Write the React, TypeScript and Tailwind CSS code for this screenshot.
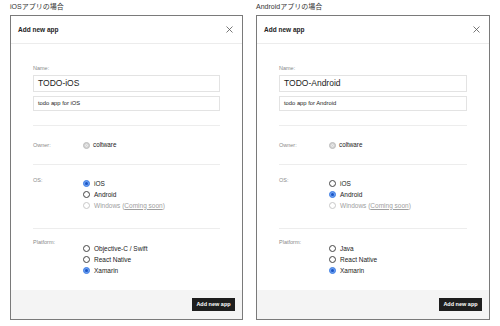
import React from 'react';

type Option = { label: string; checked?: boolean; disabled?: boolean; soon?: boolean };

function Radio({ checked, disabled }: { checked?: boolean; disabled?: boolean }) {
  if (checked) {
    return (
      <span className="w-[7px] h-[7px] rounded-full bg-[#6d9ff0] border border-[#3f7fe4] flex items-center justify-center shrink-0">
        <span className="w-[3px] h-[3px] rounded-full bg-[#1b55c4]" />
      </span>
    );
  }
  return (
    <span
      className={
        disabled
          ? 'w-[7px] h-[7px] rounded-full border border-[#c8c8c8] bg-white shrink-0'
          : 'w-[7px] h-[7px] rounded-full border border-[#444] bg-white shrink-0'
      }
    />
  );
}

function RadioGroup({ label, options, labelOffset }: { label: string; options: Option[]; labelOffset: string }) {
  return (
    <div className="flex items-start">
      <div className={`w-[50px] shrink-0 text-[5.5px] leading-[7px] text-[#8a8a8a] ${labelOffset}`}>{label}</div>
      <div className="flex flex-col">
        {options.map((o) => (
          <div key={o.label} className="h-[11px] flex items-center gap-[4px]">
            <Radio checked={o.checked} disabled={o.disabled} />
            <span
              className={
                o.disabled
                  ? 'text-[6.5px] leading-[8px] text-[#a0a0a0]'
                  : 'text-[6.5px] leading-[8px] text-[#222] font-medium'
              }
            >
              {o.soon ? (
                <>
                  {o.label} (<span className="underline">Coming soon</span>)
                </>
              ) : (
                o.label
              )}
            </span>
          </div>
        ))}
      </div>
    </div>
  );
}

function Dialog({ name, desc, os, platforms, width }: { name: string; desc: string; os: Option[]; platforms: Option[]; width: string }) {
  return (
    <div className={`${width} h-[305px] border border-[#7a7a7a] flex flex-col bg-white`}>
      <div className="h-[28px] border-b border-[#ececec] flex items-center justify-between pl-[7px] pr-[9px]">
        <span className="text-[6.5px] font-bold text-[#222]">Add new app</span>
        <svg width="7" height="7" viewBox="0 0 7 7" className="text-[#555]">
          <path d="M0.5 0.5 L6.5 6.5 M6.5 0.5 L0.5 6.5" stroke="currentColor" strokeWidth="0.8" />
        </svg>
      </div>
      <div className="flex-1 px-[22px] pt-[21px]">
        <div className="text-[5.5px] leading-[7px] text-[#8a8a8a] mb-[3px]">Name:</div>
        <div className="h-[17px] border border-[#e3e3e3] flex items-center pl-[4px] text-[8.5px] text-[#222]">{name}</div>
        <div className="mt-[4px] h-[15px] border border-[#e3e3e3] flex items-center pl-[4px] text-[5.8px] text-[#222]">{desc}</div>
        <div className="mt-[14px] border-t border-[#ededed]" />
        <div className="h-[38px] flex items-center">
          <div className="w-[50px] text-[5.5px] text-[#8a8a8a]">Owner:</div>
          <span className="w-[7px] h-[7px] rounded-full bg-[#d4d4d4] border border-[#bdbdbd] mr-[3px] flex items-center justify-center">
            <span className="w-[3px] h-[3px] rounded-full border border-[#f0f0f0]" />
          </span>
          <span className="text-[6.3px] text-[#222] font-medium">coltware</span>
        </div>
        <div className="border-t border-[#ededed]" />
        <div className="pt-[13px]">
          <RadioGroup label="OS:" options={os} labelOffset="-mt-[1px]" />
        </div>
        <div className="mt-[17px] border-t border-[#ededed]" />
        <div className="pt-[14px]">
          <RadioGroup label="Platform:" options={platforms} labelOffset="-mt-[4px]" />
        </div>
      </div>
      <div className="h-[29px] bg-[#f4f4f4] flex items-center justify-end pr-[7px]">
        <div className="w-[43px] h-[13px] bg-[#1e1e1e] text-white text-[5.5px] font-bold flex items-center justify-center">
          Add new app
        </div>
      </div>
    </div>
  );
}

export default function App() {
  return (
    <div
      className="w-[500px] h-[326px] bg-white flex pl-[10px] gap-[13px]"
      style={{ fontFamily: '"Liberation Sans", "Noto Sans CJK JP", sans-serif' }}
    >
      <div className="flex flex-col">
        <div className="h-[15px] flex items-center text-[7px] text-[#333]">iOSアプリの場合</div>
        <Dialog
          width="w-[233px]"
          name="TODO-iOS"
          desc="todo app for iOS"
          os={[
            { label: 'iOS', checked: true },
            { label: 'Android' },
            { label: 'Windows', disabled: true, soon: true },
          ]}
          platforms={[{ label: 'Objective-C / Swift' }, { label: 'React Native' }, { label: 'Xamarin', checked: true }]}
        />
      </div>
      <div className="flex flex-col">
        <div className="h-[15px] flex items-center text-[7px] text-[#333]">Androidアプリの場合</div>
        <Dialog
          width="w-[234px]"
          name="TODO-Android"
          desc="todo app for Android"
          os={[
            { label: 'iOS' },
            { label: 'Android', checked: true },
            { label: 'Windows', disabled: true, soon: true },
          ]}
          platforms={[{ label: 'Java' }, { label: 'React Native' }, { label: 'Xamarin', checked: true }]}
        />
      </div>
    </div>
  );
}
